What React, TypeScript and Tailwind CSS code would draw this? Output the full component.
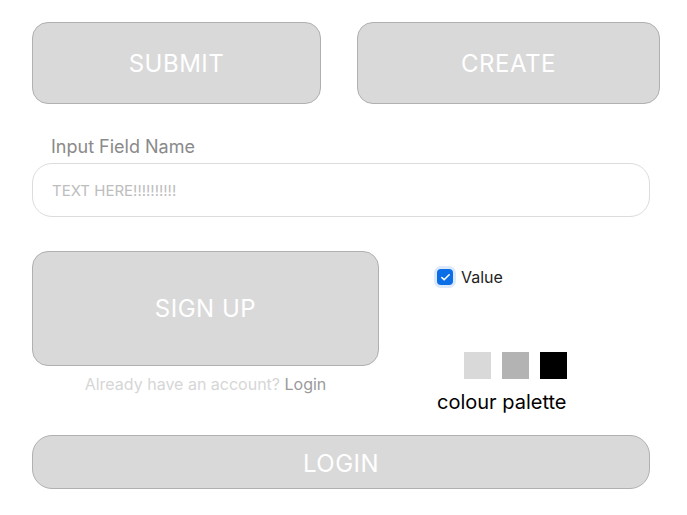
import { Check } from 'lucide-react';

const font = { fontFamily: 'Inter, "Noto Sans", sans-serif' };

const swatches = ['bg-[#d9d9d9]', 'bg-[#b3b3b3]', 'bg-black'];

export default function App() {
  return (
    <div className="min-h-[515px] w-[687px] bg-white px-[32px] pt-[22px]" style={font}>
      <div className="flex gap-[36px]">
        <button className="flex h-[82px] w-[289px] shrink-0 items-center justify-center rounded-[16px] border border-[#b0b0b0] bg-[#d9d9d9] pt-[2px] text-[24px] tracking-[0.5px] text-white">
          SUBMIT
        </button>
        <button className="flex h-[82px] w-[303px] shrink-0 items-center justify-center rounded-[16px] border border-[#b0b0b0] bg-[#d9d9d9] pt-[2px] text-[24px] tracking-[0.5px] text-white">
          CREATE
        </button>
      </div>

      <label className="mt-[31px] block pl-[19px] text-[18px] leading-[24px] text-[#8a8a8a]">Input Field Name</label>
      <div className="mt-[4px] flex h-[54px] w-[618px] items-center rounded-[20px] border border-[#dcdcdc] pl-[19px] pt-[2px] text-[15px] text-[#bdbdbd]">
        TEXT HERE!!!!!!!!!!
      </div>

      <div className="mt-[34px] flex">
        <div className="flex w-[347px] flex-col items-center">
          <button className="flex h-[115px] w-[347px] items-center justify-center rounded-[16px] border border-[#b0b0b0] bg-[#d9d9d9] text-[24px] tracking-[0.5px] text-white">
            SIGN UP
          </button>
          <p className="mt-[7px] text-[16px] leading-[22px] text-[#d6d6d6]">
            Already have an account? <span className="text-[#9a9a9a]">Login</span>
          </p>
        </div>
        <div className="ml-[58px] flex flex-col">
          <div className="mt-[16px] flex items-center gap-[8px]">
            <span className="flex h-[16px] w-[16px] items-center justify-center rounded-[4px] bg-[#0b6ee6] ring-[3px] ring-[#dbe9fb]">
              <Check size={11} strokeWidth={3.5} className="text-white" />
            </span>
            <span className="text-[16px] leading-[20px] text-[#222]">Value</span>
          </div>
          <div className="mt-[65px] flex gap-[11px] pl-[27px]">
            {swatches.map((c) => (
              <div key={c} className={`h-[27px] w-[27px] ${c}`} />
            ))}
          </div>
          <p className="mt-[10px] text-[20px] leading-[26px] text-black">colour palette</p>
        </div>
      </div>

      <button className="mt-[20px] flex h-[54px] w-[618px] items-center justify-center rounded-[20px] border border-[#b0b0b0] bg-[#d9d9d9] pt-[3px] text-[24px] tracking-[0.5px] text-white">
        LOGIN
      </button>
    </div>
  );
}
